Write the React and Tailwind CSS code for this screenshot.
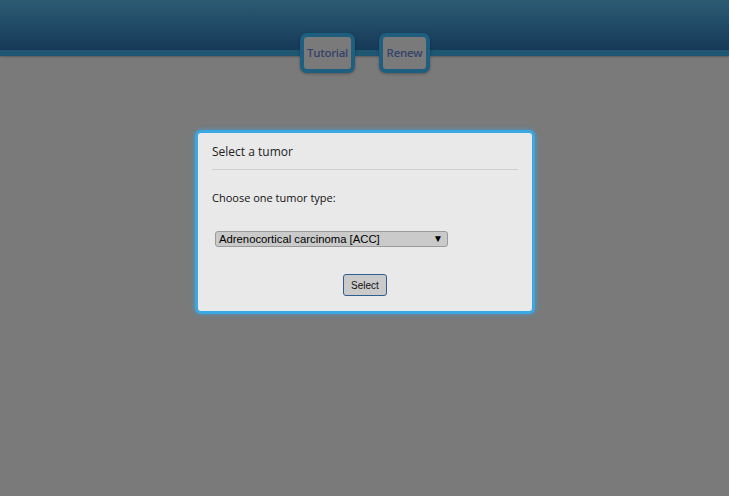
import React from "react";

export default function App() {
  return (
    <div className="min-h-[496px] w-full bg-[#7a7a7a] font-['Open_Sans',sans-serif] overflow-hidden">
      <div className="h-[50px] bg-gradient-to-b from-[#2c5b74] to-[#163a58]" />
      <div className="h-[6px] bg-[#1f5672] shadow-[0_1px_2px_rgba(0,0,0,0.25)]" />
      <div className="-mt-[23px] flex justify-center gap-[24px] pl-[1px]">
        <button className="h-[40px] w-[55px] rounded-[7px] border-[4px] border-[#1e5f80] bg-[#7a7a7a] text-[11.5px] font-semibold tracking-[-0.3px] text-[#35446a] shadow-[0_1px_3px_rgba(0,0,0,0.3)]">
          Tutorial
        </button>
        <button className="h-[40px] w-[51px] rounded-[7px] border-[4px] border-[#1e5f80] bg-[#7a7a7a] text-[11.5px] font-semibold tracking-[-0.3px] text-[#35446a] shadow-[0_1px_3px_rgba(0,0,0,0.3)]">
          Renew
        </button>
      </div>
      <div className="mt-[57px] flex justify-center pl-[1px]">
        <div className="w-[340px] rounded-[6px] border-[3px] border-[#3aa8e3] bg-[#e9e9e9] px-[14px] pt-[10px] pb-[15px] shadow-[0_0_4px_1px_rgba(58,168,227,0.5)]">
          <div className="text-[12px] leading-[17px] text-[#222]">Select a tumor</div>
          <div className="mt-[9px] h-px bg-[#cfcfcf]" />
          <div className="mt-[20px] text-[11px] leading-[16px] text-[#111]">Choose one tumor type:</div>
          <div className="mt-[25px] ml-[3px] flex h-[16px] w-[233px] items-center justify-between rounded-[3px] border border-[#9a9a9a] bg-[#cacaca] pl-[3px] pr-[4px] font-['Liberation_Sans',Arial,sans-serif] text-[11.3px] leading-[14px] text-black">
            <span>Adrenocortical carcinoma [ACC]</span>
            <span className="text-[10px]">▼</span>
          </div>
          <div className="mt-[27px] flex justify-center">
            <button className="h-[22px] w-[44px] rounded-[3px] border border-[#2f5f8f] bg-[#cacaca] font-['Liberation_Sans',Arial,sans-serif] text-[10px] text-[#111]">
              Select
            </button>
          </div>
        </div>
      </div>
    </div>
  );
}
